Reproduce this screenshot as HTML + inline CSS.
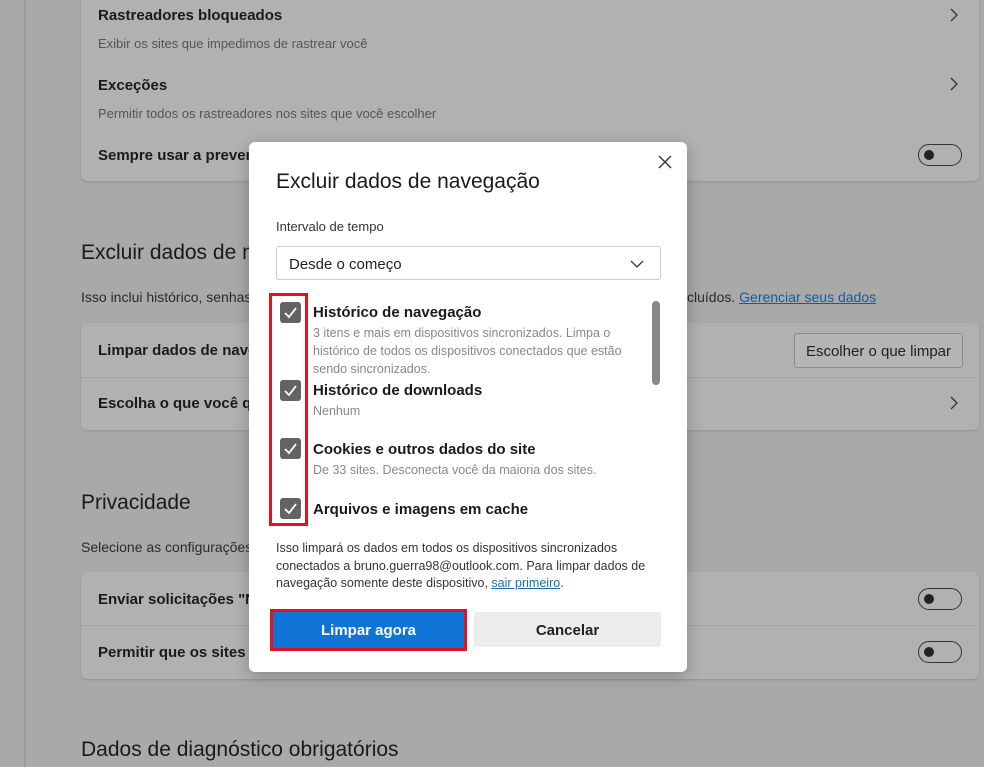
<!DOCTYPE html>
<html><head><meta charset="utf-8"><style>
*{box-sizing:border-box;margin:0;padding:0}
body{width:984px;height:767px;overflow:hidden;background:#a9a9a9;font-family:"Segoe UI","Liberation Sans",sans-serif;color:#1c1c1c;position:relative}
.a{position:absolute;white-space:nowrap}
.card{position:absolute;left:81px;width:898px;background:#b1b1b1;border-radius:6px;box-shadow:0 1px 2px rgba(0,0,0,.15)}
.t{font-size:15px;font-weight:600;color:#1a1a1a}
.s{font-size:13px;color:#555}
.h{font-size:21px;color:#1a1a1a}
.p{font-size:14px;color:#2a2a2a}
.tog{position:absolute;width:44px;height:22px;border:1px solid #333;border-radius:11px;left:918px}
.tog:after{content:"";position:absolute;left:5px;top:5px;width:10px;height:10px;border-radius:50%;background:#222}
.chev{position:absolute;left:949px}
.dlg{position:absolute;left:249px;top:142px;width:438px;height:530px;background:#fff;border-radius:6px;box-shadow:0 4px 16px rgba(0,0,0,.25)}
.cb{position:absolute;left:31px;width:21px;height:21px;background:#636363;border-radius:3px}
.cb svg{position:absolute;left:3px;top:3px}
.lt{position:absolute;left:64px;font-size:15px;font-weight:600;color:#1a1a1a}
.ls{position:absolute;left:64px;font-size:12.5px;color:#888;line-height:18px}
</style></head><body>
<div class="a" style="left:24px;top:0;width:2px;height:767px;background:#9a9a9a"></div>
<div class="card" style="top:-10px;height:191px"></div>
<div class="a t" style="left:98px;top:7px">Rastreadores bloqueados</div>
<div class="a s" style="left:98px;top:36px">Exibir os sites que impedimos de rastrear você</div>
<svg class="chev" style="top:8px" width="10" height="14"><path d="M2 1L8 7L2 13" stroke="#333" stroke-width="1.3" fill="none"/></svg>
<div class="a t" style="left:98px;top:77px">Exceções</div>
<div class="a s" style="left:98px;top:106px">Permitir todos os rastreadores nos sites que você escolher</div>
<svg class="chev" style="top:77px" width="10" height="14"><path d="M2 1L8 7L2 13" stroke="#333" stroke-width="1.3" fill="none"/></svg>
<div class="a t" style="left:98px;top:147px">Sempre usar a prevenção</div>
<div class="tog" style="top:144px"></div>
<div class="a h" style="left:81px;top:241px">Excluir dados de navegação</div>
<div class="a p" style="left:81px;top:289px">Isso inclui histórico, senhas, cookies e muito mais.</div>
<div class="a p" style="left:687px;top:289px">cluídos. <span style="color:#1a5a96;text-decoration:underline">Gerenciar seus dados</span></div>
<div class="card" style="top:323px;height:107px"></div>
<div class="a" style="left:81px;top:377px;width:898px;height:1px;background:#a2a2a2"></div>
<div class="a t" style="left:98px;top:342px">Limpar dados de navegação agora</div>
<div class="a" style="left:794px;top:333px;width:169px;height:35px;border:1px solid #8a8a8a;border-radius:3px;background:#b5b5b5;font-size:15px;text-align:center;line-height:35px;color:#222">Escolher o que limpar</div>
<div class="a t" style="left:98px;top:395px">Escolha o que você quer limpar</div>
<svg class="chev" style="top:396px" width="10" height="14"><path d="M2 1L8 7L2 13" stroke="#333" stroke-width="1.3" fill="none"/></svg>
<div class="a h" style="left:81px;top:491px">Privacidade</div>
<div class="a p" style="left:81px;top:539px">Selecione as configurações de privacidade</div>
<div class="card" style="top:572px;height:107px"></div>
<div class="a" style="left:81px;top:625px;width:898px;height:1px;background:#a2a2a2"></div>
<div class="a t" style="left:98px;top:591px">Enviar solicitações "Não rastrear"</div>
<div class="tog" style="top:588px"></div>
<div class="a t" style="left:98px;top:644px">Permitir que os sites verifiquem</div>
<div class="tog" style="top:641px"></div>
<div class="a h" style="left:81px;top:738px">Dados de diagnóstico obrigatórios</div>

<div class="dlg">
<svg class="a" style="left:409px;top:13px" width="14" height="14"><path d="M1 1L13 13M13 1L1 13" stroke="#333" stroke-width="1.4"/></svg>
<div class="a" style="left:27px;top:28px;font-size:21px;color:#1a1a1a">Excluir dados de navegação</div>
<div class="a" style="left:27px;top:77px;font-size:13px;color:#333">Intervalo de tempo</div>
<div class="a" style="left:27px;top:104px;width:385px;height:34px;border:1px solid #ccc;border-radius:3px;font-size:15px;padding-left:12px;line-height:36px;color:#222">Desde o começo
<svg class="a" style="left:353px;top:13px" width="14" height="8"><path d="M1 1L7 7L13 1" stroke="#333" stroke-width="1.3" fill="none"/></svg></div>
<div class="a" style="left:20px;top:151px;width:39px;height:233px;border:3px solid #e3121f"></div>
<div class="cb" style="top:160px"><svg width="15" height="15"><path d="M2 8L6 12L13 3" stroke="#fff" stroke-width="1.8" fill="none"/></svg></div>
<div class="cb" style="top:238px"><svg width="15" height="15"><path d="M2 8L6 12L13 3" stroke="#fff" stroke-width="1.8" fill="none"/></svg></div>
<div class="cb" style="top:296px"><svg width="15" height="15"><path d="M2 8L6 12L13 3" stroke="#fff" stroke-width="1.8" fill="none"/></svg></div>
<div class="cb" style="top:356px"><svg width="15" height="15"><path d="M2 8L6 12L13 3" stroke="#fff" stroke-width="1.8" fill="none"/></svg></div>
<div class="lt" style="top:162px">Histórico de navegação</div>
<div class="ls" style="top:182px">3 itens e mais em dispositivos sincronizados. Limpa o<br>histórico de todos os dispositivos conectados que estão<br>sendo sincronizados.</div>
<div class="lt" style="top:240px">Histórico de downloads</div>
<div class="ls" style="top:260px">Nenhum</div>
<div class="lt" style="top:299px">Cookies e outros dados do site</div>
<div class="ls" style="top:319px">De 33 sites. Desconecta você da maioria dos sites.</div>
<div class="lt" style="top:359px">Arquivos e imagens em cache</div>
<div class="a" style="left:403px;top:159px;width:8px;height:84px;background:#888;border-radius:4px"></div>
<div class="a" style="left:27px;top:398px;font-size:12.5px;line-height:17.5px;color:#333">Isso limpará os dados em todos os dispositivos sincronizados<br>conectados a bruno.guerra98@outlook.com. Para limpar dados de<br>navegação somente deste dispositivo, <span style="color:#1a6bb3;text-decoration:underline">sair primeiro</span>.</div>
<div class="a" style="left:21px;top:467px;width:197px;height:42px;border:3px solid #e3121f"></div>
<div class="a" style="left:24px;top:470px;width:191px;height:36px;background:#0f74d6;color:#fff;font-size:15px;font-weight:600;text-align:center;line-height:38px">Limpar agora</div>
<div class="a" style="left:225px;top:470px;width:187px;height:35px;background:#ececec;border-radius:3px;color:#222;font-size:15px;font-weight:600;text-align:center;line-height:37px">Cancelar</div>
</div>
</body></html>
